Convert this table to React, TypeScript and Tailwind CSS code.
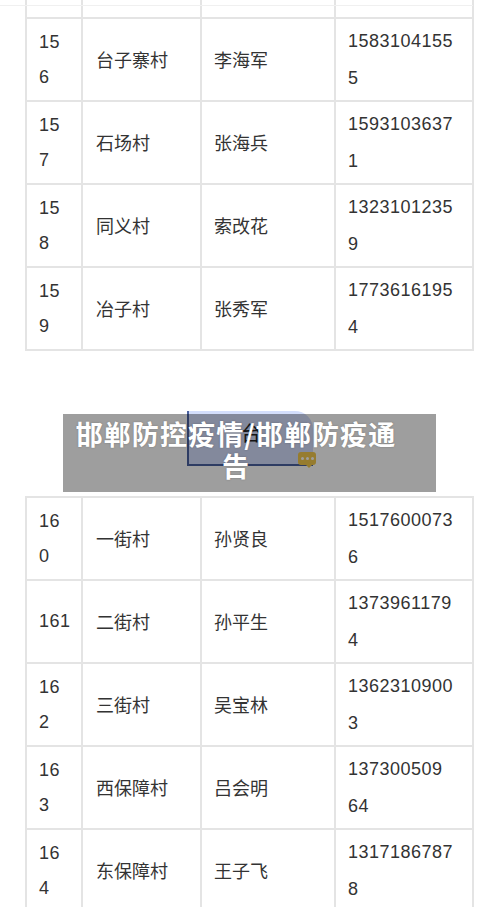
import React from "react";

type Row = { no: string[]; village: string; name: string; phone: string[] };

const table1: Row[] = [
  { no: ["15", "6"], village: "台子寨村", name: "李海军", phone: ["1583104155", "5"] },
  { no: ["15", "7"], village: "石场村", name: "张海兵", phone: ["1593103637", "1"] },
  { no: ["15", "8"], village: "同义村", name: "索改花", phone: ["1323101235", "9"] },
  { no: ["15", "9"], village: "冶子村", name: "张秀军", phone: ["1773616195", "4"] },
];

const table2: Row[] = [
  { no: ["16", "0"], village: "一街村", name: "孙贤良", phone: ["1517600073", "6"] },
  { no: ["161"], village: "二街村", name: "孙平生", phone: ["1373961179", "4"] },
  { no: ["16", "2"], village: "三街村", name: "吴宝林", phone: ["1362310900", "3"] },
  { no: ["16", "3"], village: "西保障村", name: "吕会明", phone: ["137300509", "64"] },
  { no: ["16", "4"], village: "东保障村", name: "王子飞", phone: ["1317186787", "8"] },
];

const cjk = { fontFamily: '"Noto Sans CJK SC", "Noto Sans", sans-serif' };
const num = { fontFamily: '"Liberation Sans", Arial, sans-serif' };

function Lines({ parts }: { parts: string[] }) {
  return (
    <div className="whitespace-nowrap tracking-[0.5px]" style={num}>
      {parts.map((p, i) => (
        <div key={i}>{p}</div>
      ))}
    </div>
  );
}

function TableRow({ r }: { r: Row }) {
  return (
    <div className="grid grid-cols-[56px_119px_134px_136px] h-[83px] border-b-2 border-[#e4e4e4] text-[18px] text-[#333]">
      <div className="flex items-center pl-3 border-r-2 border-[#e4e4e4] leading-[35px]">
        <Lines parts={r.no} />
      </div>
      <div className="flex items-center pl-[13px] border-r-2 border-[#e4e4e4]" style={cjk}>
        {r.village}
      </div>
      <div className="flex items-center pl-3 border-r-2 border-[#e4e4e4]" style={cjk}>
        {r.name}
      </div>
      <div className="flex items-center pl-3 leading-[37px]">
        <Lines parts={r.phone} />
      </div>
    </div>
  );
}

export default function App() {
  return (
    <div className="relative w-[500px] bg-white overflow-hidden">
      <div className="absolute top-[5px] left-0 w-[473px] h-px bg-[#f0f0f0]" />

      {/* Table 1 */}
      <div className="ml-[25px] w-[449px] border-x-2 border-[#e4e4e4]">
        <div className="grid grid-cols-[56px_119px_134px_136px] h-[19px] border-b-2 border-[#e4e4e4]">
          <div className="border-r-2 border-[#e4e4e4]" />
          <div className="border-r-2 border-[#e4e4e4]" />
          <div className="border-r-2 border-[#e4e4e4]" />
          <div />
        </div>
        {table1.map((r, i) => (
          <TableRow key={i} r={r} />
        ))}
      </div>

      {/* Gap with picture and title banner */}
      <div className="relative h-[145px] pt-[60px]">
        <div className="relative ml-[187px] w-[126px] h-[55px] bg-[#d3defc] rounded-tr-[18px] border-l-2 border-b-2 border-[#4b62a0]">
          <div className="absolute left-[52px] top-[12px] text-[20px] leading-none text-[#222]" style={cjk}>
            台
          </div>
          <div className="absolute left-[109px] top-[41px] w-[18px] h-[13px] rounded-[3px] bg-[#f2c94c] flex items-center justify-center gap-[2px]">
            <span className="w-[3px] h-[3px] rounded-full bg-white" />
            <span className="w-[3px] h-[3px] rounded-full bg-white" />
            <span className="w-[3px] h-[3px] rounded-full bg-white" />
            <span className="absolute -bottom-[3px] right-[4px] w-0 h-0 border-l-[3px] border-r-[3px] border-t-[3px] border-l-transparent border-r-transparent border-t-[#f2c94c]" />
          </div>
        </div>

        <div className="absolute top-[63px] left-[63px] w-[373px] h-[78px] bg-[rgba(0,0,0,0.38)] pl-[6px] pr-[33px] pt-[4px]">
          <div
            className="text-center text-white font-bold text-[27px] leading-[32px] tracking-[1.1px] whitespace-nowrap [text-shadow:0_0_2px_rgba(0,0,0,0.25)]"
            style={cjk}
          >
            邯郸防控疫情/邯郸防疫通
            <br />
            告
          </div>
        </div>
      </div>

      {/* Table 2 */}
      <div className="ml-[25px] w-[449px] border-x-2 border-t-2 border-[#e4e4e4]">
        {table2.map((r, i) => (
          <TableRow key={i} r={r} />
        ))}
      </div>
    </div>
  );
}
